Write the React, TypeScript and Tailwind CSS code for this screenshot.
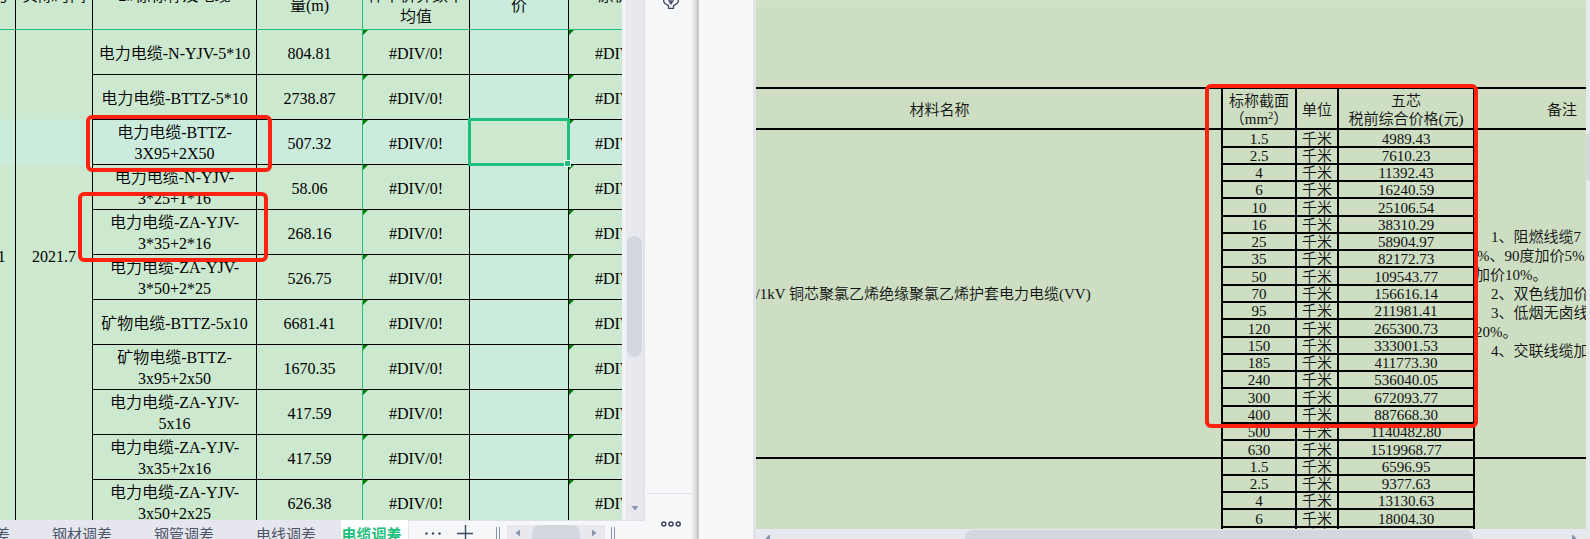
import React from "react";

type CableRow = { name: string[]; qty: string };

const cables: CableRow[] = [
  { name: ["电力电缆-N-YJV-5*10"], qty: "804.81" },
  { name: ["电力电缆-BTTZ-5*10"], qty: "2738.87" },
  { name: ["电力电缆-BTTZ-", "3X95+2X50"], qty: "507.32" },
  { name: ["电力电缆-N-YJV-", "3*25+1*16"], qty: "58.06" },
  { name: ["电力电缆-ZA-YJV-", "3*35+2*16"], qty: "268.16" },
  { name: ["电力电缆-ZA-YJV-", "3*50+2*25"], qty: "526.75" },
  { name: ["矿物电缆-BTTZ-5x10"], qty: "6681.41" },
  { name: ["矿物电缆-BTTZ-", "3x95+2x50"], qty: "1670.35" },
  { name: ["电力电缆-ZA-YJV-", "5x16"], qty: "417.59" },
  { name: ["电力电缆-ZA-YJV-", "3x35+2x16"], qty: "417.59" },
  { name: ["电力电缆-ZA-YJV-", "3x50+2x25"], qty: "626.38" },
];

const ACTIVE_ROW = 2;

const prices: [string, string][] = [
  ["1.5", "4989.43"],
  ["2.5", "7610.23"],
  ["4", "11392.43"],
  ["6", "16240.59"],
  ["10", "25106.54"],
  ["16", "38310.29"],
  ["25", "58904.97"],
  ["35", "82172.73"],
  ["50", "109543.77"],
  ["70", "156616.14"],
  ["95", "211981.41"],
  ["120", "265300.73"],
  ["150", "333001.53"],
  ["185", "411773.30"],
  ["240", "536040.05"],
  ["300", "672093.77"],
  ["400", "887668.30"],
  ["500", "1140482.80"],
  ["630", "1519968.77"],
  ["1.5", "6596.95"],
  ["2.5", "9377.63"],
  ["4", "13130.63"],
  ["6", "18004.30"],
  ["10", "27215.60"],
];

const GROUP_SIZE = 19;
const tallRows = [0, 4, 8, 11, 15, 18, 22];

function ErrorFlag() {
  return (
    <span className="absolute left-0 top-0 size-[5px] bg-[#007f00] [clip-path:polygon(0_0,100%_0,0_100%)]" />
  );
}

function MarkBox({ className }: { className: string }) {
  return (
    <div
      className={`pointer-events-none absolute z-20 rounded-md border-4 border-[#ff2211] ${className}`}
    />
  );
}

function Arrow({ className }: { className: string }) {
  return (
    <svg viewBox="0 0 8 8" className={`size-2 fill-[#8694ae] ${className}`} aria-hidden="true">
      <path d="M6 0.5v7L1.5 4z" />
    </svg>
  );
}

function QuantitySheet() {
  const cell = "relative border-b border-r border-black p-0 pt-0.5";
  const merged =
    "border-r border-black p-0 pt-0.5 bg-[linear-gradient(transparent_89px,#cbebdc_89px,#cbebdc_135px,transparent_135px)]";
  const head = "border-b border-r border-b-[#1ebe7e] border-r-black p-0 font-[350]";
  return (
    <div className="relative min-h-0 flex-1 overflow-hidden bg-[#cce8cf]">
      <table className="-ml-3 -mt-[39px] w-[688px] table-fixed border-separate border-spacing-0 text-center text-base leading-[21px]">
        <colgroup>
          <col className="w-7" />
          <col className="w-[77px]" />
          <col className="w-[164px]" />
          <col className="w-[106px]" />
          <col className="w-[107px]" />
          <col className="w-[99px]" />
          <col className="w-[107px]" />
        </colgroup>
        <thead>
          <tr className="h-[69px]">
            <th className={head}>号</th>
            <th className={head}>实际时间</th>
            <th className={head}>2#栋标称及电缆</th>
            <th className="border-b border-r border-[#1ebe7e] p-0 font-[350]">
              工程
              <br />
              量(m)
            </th>
            <th className={head}>
              材料
              <br />
              件单价算数平
              <br />
              均值
            </th>
            <th className={`${head} bg-[#cbebdc]`}>
              综合单
              <br />价
            </th>
            <th className={head}>原价格</th>
          </tr>
        </thead>
        <tbody>
          {cables.map((row, i) => {
            const tone = i === ACTIVE_ROW ? "bg-[#cbebdc]" : "";
            return (
              <tr key={i} className="h-[45px]">
                {i === 0 && (
                  <>
                    <td rowSpan={10} className={merged}>
                      1
                    </td>
                    <td rowSpan={10} className={merged}>
                      2021.7
                    </td>
                  </>
                )}
                {i === 10 && (
                  <>
                    <td className="border-r border-black p-0" />
                    <td className="border-r border-black p-0" />
                  </>
                )}
                <td className={`${cell} ${tone}`}>
                  {row.name.map((line) => (
                    <div key={line}>{line}</div>
                  ))}
                </td>
                <td
                  className={`relative border-b border-r border-b-black border-r-[#1ebe7e] p-0 pt-0.5 ${tone}`}
                >
                  {row.qty}
                </td>
                <td className={`${cell} ${tone}`}>
                  <ErrorFlag />
                  #DIV/0!
                </td>
                <td className={`${cell} ${i === ACTIVE_ROW ? "" : "bg-[#cbebdc]"}`}>
                  {i === ACTIVE_ROW && (
                    <div className="absolute -inset-[2px] z-10 border-3 border-[#1ebe7e]">
                      <span className="absolute -bottom-1 -right-1 size-[7px] border border-white bg-[#1ebe7e]" />
                    </div>
                  )}
                </td>
                <td className={`${cell} ${tone}`}>
                  <ErrorFlag />
                  #DIV/0!
                </td>
              </tr>
            );
          })}
        </tbody>
      </table>
      <MarkBox className="left-[86px] top-[115px] h-[57px] w-[186px]" />
      <MarkBox className="left-[78px] top-[192px] h-[70px] w-[190px]" />
    </div>
  );
}

function SheetTabs() {
  const tab = "h-full w-[102px] shrink-0 whitespace-nowrap text-center text-[#4c5469]";
  return (
    <div className="flex h-[19px] items-stretch overflow-hidden bg-[#f5f7f9] font-['Noto_Sans_CJK_SC',sans-serif] text-[15px] font-normal leading-[27px]">
      <div className="flex w-[341px] shrink-0 justify-end bg-[#e6e7ee]">
        <button className={tab}>人工调差</button>
        <button className={tab}>钢材调差</button>
        <button className={tab}>钢管调差</button>
        <button className={`${tab} mr-1`}>电线调差</button>
      </div>
      <button className="w-[67px] shrink-0 whitespace-nowrap bg-white pr-1.5 text-center font-bold text-[#1ebe7e]">
        电缆调差
      </button>
      <div className="flex flex-1 items-start border-l border-t border-[#e0e1e9] text-[#3d4a66]">
        <button aria-label="更多工作表" className="ml-4 pt-[11px]">
          <svg viewBox="0 0 16 3" className="h-[3px] w-4 fill-current">
            <circle cx="1.5" cy="1.5" r="1.2" />
            <circle cx="8" cy="1.5" r="1.2" />
            <circle cx="14.5" cy="1.5" r="1.2" />
          </svg>
        </button>
        <button aria-label="新建工作表" className="ml-4 pt-1">
          <svg viewBox="0 0 16 16" className="size-4 stroke-current" strokeWidth="1.4">
            <path d="M0 8.5h16M8.500 0v16" />
          </svg>
        </button>
        <div className="ml-[23px] mt-1.5 h-4 w-1 border-x border-[#8694ae]" />
        <div className="ml-[7px] mt-1 flex h-4 w-[98px] items-start justify-between bg-[#e8e9ef] px-[7px]">
          <Arrow className="mt-1" />
          <div className="h-5 w-12 rounded-lg bg-[#d4d7df]" />
          <Arrow className="mt-1 rotate-180" />
        </div>
        <div className="ml-1.5 mt-1.5 h-4 w-1 border-x border-[#8694ae]" />
      </div>
    </div>
  );
}

function VerticalScroll() {
  return (
    <div className="flex w-[23px] shrink-0 flex-col border-r-2 border-[#e2e3ea] bg-[#e8e9ef]">
      <div className="flex flex-1 flex-col items-center border-l-4 border-[#f2f3f9]">
        <div className="h-[236px]" />
        <div className="h-[121px] w-[15px] rounded-lg bg-[#d4d7df]" />
        <div className="flex-1" />
        <Arrow className="mb-2 -rotate-90" />
      </div>
    </div>
  );
}

function ToolRail() {
  return (
    <div className="flex w-[54px] shrink-0 flex-col bg-[linear-gradient(to_right,#f6f7f9_46px,#d9dadc_51px,#bfc0c1_53px,#d8d9da_54px)] text-[#3d4660]">
      <button aria-label="工具" className="ml-[18px] h-[9px] w-4">
        <svg viewBox="0 0 16 9" className="h-[9px] w-4 fill-none stroke-current" strokeWidth="1.3">
          <path d="M0.700 0v1.500L2 3.500l3.500 2.200v2.600h5V5.700L14 3.500l1.300-2V0M5.500 0L8 3.800 10.500 0M8 0v3.800" />
        </svg>
      </button>
      <div className="flex-1" />
      <div className="ml-0.5 mr-1 h-px bg-[#dfe1e5]" />
      <button aria-label="更多" className="flex h-[45px] justify-center pr-0.5 pt-[27px]">
        <svg viewBox="0 0 20 6" className="h-1.5 w-5 fill-none stroke-current" strokeWidth="1.5">
          <circle cx="2.8" cy="3" r="2" />
          <circle cx="10" cy="3" r="2" />
          <circle cx="17.2" cy="3" r="2" />
        </svg>
      </button>
    </div>
  );
}

function Notes() {
  return (
    <div className="whitespace-nowrap text-left">
      <p className="pl-4">1、阻燃线缆7</p>
      <p className="pl-0.5">%、90度加价5%</p>
      <p>加价10%。</p>
      <p className="pl-4">2、双色线加价</p>
      <p className="pl-4">3、低烟无卤线</p>
      <p>20%。</p>
      <p className="pl-4">4、交联线缆加</p>
    </div>
  );
}

function PriceSheet() {
  const cell = "border-b-2 border-r-2 border-black p-0 pt-0.5";
  const head = "border-b-2 border-r-2 border-t-2 border-black p-0 pt-[3px] font-[350]";
  return (
    <div className="relative min-h-0 flex-1 overflow-hidden bg-[#cddec3]">
      <div className="h-[87px] border-t-[7px] border-[#d1e2c7]" />
      <table className="w-[calc(100%+65px)] table-fixed border-separate border-spacing-0 text-center text-[15px] leading-[13px] text-[#111111]">
        <colgroup>
          <col />
          <col className="w-[74px]" />
          <col className="w-[42px]" />
          <col className="w-[136px]" />
          <col className="w-[176px]" />
        </colgroup>
        <thead>
          <tr className="h-[43px]">
            <th className={`${head} pr-[98px]`}>材料名称</th>
            <th className={`${head} leading-[18px]`}>
              标称截面
              <br />
              （mm<sup className="text-[10px] leading-[0]">2</sup>）
            </th>
            <th className={head}>单位</th>
            <th className={`${head} leading-[18px]`}>
              五芯
              <br />
              税前综合价格(元)
            </th>
            <th className={head}>备注</th>
          </tr>
        </thead>
        <tbody>
          {prices.map(([size, price], i) => (
            <tr key={i} className={tallRows.includes(i) ? "h-[18px]" : "h-[17px]"}>
              {i === 0 && (
                <td rowSpan={GROUP_SIZE} className={`${cell} text-left`}>
                  <div className="-ml-2 whitespace-nowrap">
                    6/1kV 铜芯聚氯乙烯绝缘聚氯乙烯护套电力电缆(VV)
                  </div>
                </td>
              )}
              {i === GROUP_SIZE && <td rowSpan={5} className={cell} />}
              <td className={cell}>{size}</td>
              <td className={cell}>千米</td>
              <td className={cell}>{price}</td>
              {i === 0 && (
                <td rowSpan={GROUP_SIZE} className={`${cell} leading-[19px]`}>
                  <Notes />
                </td>
              )}
              {i === GROUP_SIZE && <td rowSpan={5} className={cell} />}
            </tr>
          ))}
        </tbody>
      </table>
      <MarkBox className="right-[108px] top-[84px] h-[344px] w-[273px]" />
    </div>
  );
}

export default function App() {
  return (
    <div className="flex h-screen overflow-hidden bg-[#f5f7f9] font-['Liberation_Serif','Noto_Sans_CJK_SC',serif] font-[350] text-black">
      <section className="flex w-[645px] shrink-0 flex-col">
        <div className="flex min-h-0 flex-1">
          <QuantitySheet />
          <VerticalScroll />
        </div>
        <SheetTabs />
      </section>
      <ToolRail />
      <div className="w-[57px] shrink-0 border-r-3 border-[#e2e3ea] bg-[#f5f7f9]" />
      <section className="flex min-w-0 flex-1 flex-col">
        <PriceSheet />
        <div className="flex h-2.5 items-start justify-between overflow-hidden bg-[#e8e9ef] px-2 pt-px">
          <Arrow className="mt-1 shrink-0" />
          <div className="ml-[193px] mr-[97px] h-4 flex-1 rounded-lg bg-[#d4d7df]" />
          <Arrow className="mt-1 shrink-0 rotate-180" />
        </div>
      </section>
      <div className="w-1 shrink-0 bg-[#e8e9ef] pt-[133px]">
        <div className="h-12 rounded-l bg-[#d4d7df]" />
      </div>
    </div>
  );
}
